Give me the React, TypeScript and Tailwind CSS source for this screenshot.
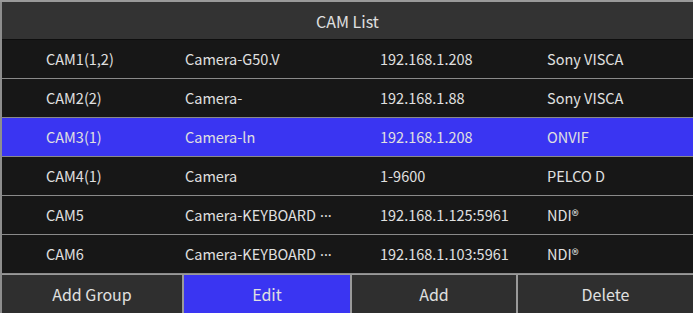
const rows = [
  { name: "CAM1(1,2)", cam: "Camera-G50.V", ip: "192.168.1.208", proto: "Sony VISCA" },
  { name: "CAM2(2)", cam: "Camera-", ip: "192.168.1.88", proto: "Sony VISCA" },
  { name: "CAM3(1)", cam: "Camera-ln", ip: "192.168.1.208", proto: "ONVIF", active: true },
  { name: "CAM4(1)", cam: "Camera", ip: "1-9600", proto: "PELCO D" },
  { name: "CAM5", cam: "Camera-KEYBOARD", more: true, ip: "192.168.1.125:5961", proto: "NDI®" },
  { name: "CAM6", cam: "Camera-KEYBOARD", more: true, ip: "192.168.1.103:5961", proto: "NDI®" },
];

const buttons = [
  { label: "Add Group", w: "w-[180px]" },
  { label: "Edit", w: "w-[168px]", active: true },
  { label: "Add", w: "w-[166px]" },
  { label: "Delete", w: "flex-1" },
];

export default function App() {
  return (
    <div
      className="w-[693px] h-[313px] bg-[#171717] text-[#e0e0e0] overflow-hidden flex flex-col"
      style={{ fontFamily: '"Noto Sans CJK SC", "Noto Sans", sans-serif' }}
    >
      {/* top strip */}
      <div className="h-[2px] bg-[#9a9a9a]" />

      <div className="flex-1 flex flex-col border-l-2 border-[#8e8e8e]">
        {/* Header */}
        <div className="h-[38px] bg-[#333333] flex items-center justify-center text-[16px] border-b border-[#0e0e0e]">
          CAM List
        </div>

        {/* Rows */}
        {rows.map((r) => (
          <div
            key={r.name}
            className={`h-[39px] flex items-center text-[14.5px] border-b border-[#8a8a8a] ${
              r.active ? "bg-[#3a35f2]" : "bg-[#171717]"
            }`}
          >
            <div className="pl-[44px] w-[183px]">{r.name}</div>
            <div className="w-[195px]">
              {r.cam}
              {r.more && <span className="font-['Noto_Sans'] ml-[4px]">···</span>}
            </div>
            <div className="w-[167px]">{r.ip}</div>
            <div>{r.proto}</div>
          </div>
        ))}

        {/* Buttons */}
        <div className="flex-1 flex border-t border-[#9a9a9a]">
          {buttons.map((b, i) => (
            <div
              key={b.label}
              className={`${b.w} flex items-center justify-center text-[16px] ${
                i > 0 ? "border-l-2 border-[#9a9a9a]" : ""
              } ${b.active ? "bg-[#3a35f2]" : "bg-[#2f2f2f]"}`}
            >
              {b.label}
            </div>
          ))}
        </div>
      </div>
    </div>
  );
}
